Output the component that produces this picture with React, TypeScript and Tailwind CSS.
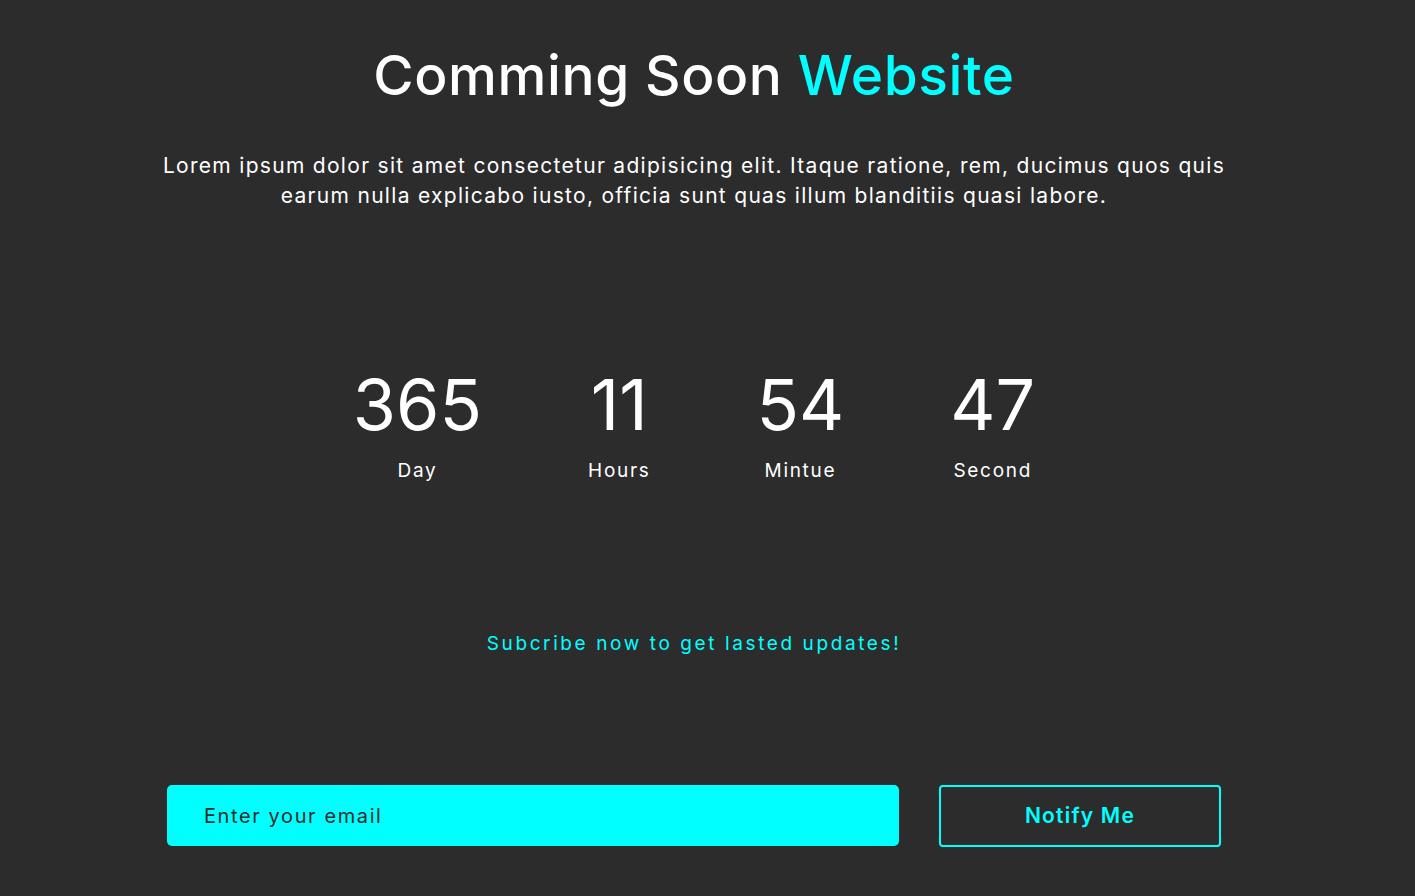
import React from 'react';

const countdown = [
  { value: '365', label: 'Day' },
  { value: '11', label: 'Hours' },
  { value: '54', label: 'Mintue' },
  { value: '47', label: 'Second' },
];

const App: React.FC = () => {
  return (
    <div
      className="min-h-screen bg-[#2c2c2c] text-white flex flex-col items-center pr-[27px]"
      style={{ fontFamily: '"Inter", "Open Sans", sans-serif' }}
    >
      <h1 className="mt-[42px] text-[55px] leading-[66px] font-medium tracking-[0.6px]">
        Comming Soon <span className="text-[#00ffff]">Website</span>
      </h1>

      <p className="mt-[43px] text-[21px] leading-[30px] tracking-[1.3px] text-center">
        Lorem ipsum dolor sit amet consectetur adipisicing elit. Itaque ratione, rem, ducimus quos quis
        <br />
        earum nulla explicabo iusto, officia sunt quas illum blanditiis quasi labore.
      </p>

      <div className="mt-[154px] flex gap-[106px]">
        {countdown.map((item) => (
          <div key={item.label} className="flex flex-col items-center">
            <span className="text-[70px] leading-[80px] font-normal">{item.value}</span>
            <span className="mt-[14px] text-[19px] leading-[24px] tracking-[1.7px]">{item.label}</span>
          </div>
        ))}
      </div>

      <p className="mt-[149px] text-[19px] leading-[24px] tracking-[2.6px] text-[#00ffff]">
        Subcribe now to get lasted updates!
      </p>

      <div className="mt-[129px] w-[1054px] flex gap-[40px]">
        <input
          type="email"
          placeholder="Enter your email"
          className="flex-1 h-[61px] rounded-[5px] bg-[#00ffff] px-[37px] text-[20px] tracking-[1.6px] text-[#2c2c2c] placeholder:text-[#2c2c2c] outline-none"
        />
        <button className="w-[282px] h-[62px] rounded-[4px] border-2 border-[#00ffff] text-[#00ffff] text-[21px] font-semibold tracking-[1.2px]">
          Notify Me
        </button>
      </div>
    </div>
  );
};

export default App;
